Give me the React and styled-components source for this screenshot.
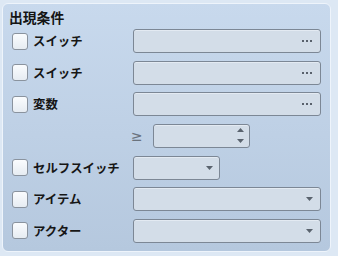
import React from "react";
import styled, { createGlobalStyle } from "styled-components";

const Global = createGlobalStyle`
  html, body { margin: 0; padding: 0; background: #dde8f4; }
  body { font-family: "Noto Sans CJK JP", "Noto Sans", sans-serif; }
`;

const Panel = styled.div`
  box-sizing: border-box;
  margin: 3px 0 0 2px;
  width: 329px;
  height: 249px;
  border-radius: 6px;
  border: 1px solid #eef4fb;
  background: linear-gradient(#c8d9ed, #b5c8de);
  padding: 5px 9px 0 5px;
`;

const Title = styled.div`
  font-size: 13.8px;
  font-weight: 700;
  line-height: 16px;
  color: #141414;
  margin: 0 0 4px 1px;
  height: 16px;
`;

const Grid = styled.div`
  display: grid;
  grid-template-columns: 121px 188px;
  grid-auto-rows: 24px;
  row-gap: 7.67px;
  margin-left: 4px;
`;

const Label = styled.label`
  display: flex;
  align-items: center;
  gap: 5px;
  font-size: 12.4px;
  font-weight: 700;
  color: #161616;
  white-space: nowrap;
`;

const Check = styled.span`
  box-sizing: border-box;
  width: 16px;
  height: 17px;
  border-radius: 3px;
  border: 1px solid #8a939e;
  background: linear-gradient(#fafcfe, #e6ecf2);
  flex: none;
`;

const Field = styled.div`
  box-sizing: border-box;
  width: ${(p) => p.$w || "100%"};
  height: 24px;
  border: 1px solid #7c8795;
  border-radius: 3px;
  background: #d3dde8;
  box-shadow: inset 0 1px 0 #e3eaf2;
  display: flex;
  align-items: center;
  justify-content: flex-end;
  padding-right: ${(p) => p.$pr || 7}px;
`;

const NumCell = styled.div`
  grid-column: 2;
  display: flex;
  align-items: center;
  margin-left: -2px;
`;

const Ge = styled.span`
  width: 22px;
  font-family: "DejaVu Sans", sans-serif;
  font-size: 14px;
  color: #6a737e;
  line-height: 24px;
`;

const Spin = styled.div`
  display: flex;
  flex-direction: column;
  gap: 7px;
`;

const Dots = () => (
  <svg width="10" height="2" viewBox="0 0 10 2">
    <rect x="0" y="0" width="2" height="2" fill="#59616c" />
    <rect x="4" y="0" width="2" height="2" fill="#59616c" />
    <rect x="8" y="0" width="2" height="2" fill="#59616c" />
  </svg>
);

const Down = () => (
  <svg width="7" height="4" viewBox="0 0 7 4">
    <path d="M0 0H7L3.5 4Z" fill="#5a636e" />
  </svg>
);

const Up = () => (
  <svg width="7" height="4" viewBox="0 0 7 4">
    <path d="M0 4H7L3.5 0Z" fill="#5a636e" />
  </svg>
);

const Row = ({ label, children }) => (
  <>
    <Label>
      <Check />
      {label}
    </Label>
    {children}
  </>
);

export default function App() {
  return (
    <>
      <Global />
      <Panel>
        <Title>出現条件</Title>
        <Grid>
          <Row label="スイッチ">
            <Field $pr={8}><Dots /></Field>
          </Row>
          <Row label="スイッチ">
            <Field $pr={8}><Dots /></Field>
          </Row>
          <Row label="変数">
            <Field $pr={8}><Dots /></Field>
          </Row>
          <NumCell>
            <Ge>≥</Ge>
            <Field $w="97px" $pr={5}>
              <Spin>
                <Up />
                <Down />
              </Spin>
            </Field>
          </NumCell>
          <Row label="セルフスイッチ">
            <Field $w="87px" $pr={6}><Down /></Field>
          </Row>
          <Row label="アイテム">
            <Field $pr={7}><Down /></Field>
          </Row>
          <Row label="アクター">
            <Field $pr={7}><Down /></Field>
          </Row>
        </Grid>
      </Panel>
    </>
  );
}
